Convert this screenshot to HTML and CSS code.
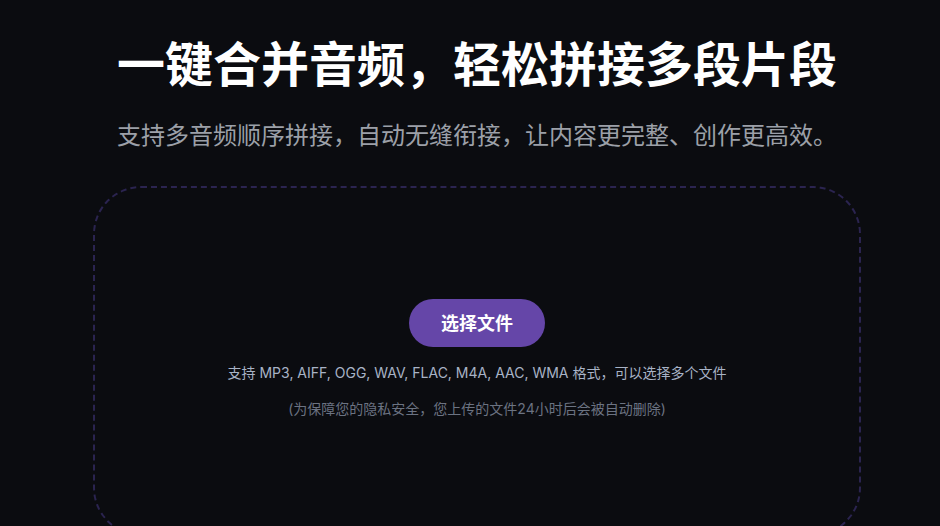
FILE: index.html
```html
<!DOCTYPE html>
<html lang="zh-CN">
<head>
    <meta charset="UTF-8">
    <meta name="viewport" content="width=device-width, initial-scale=1.0">
    <title>音频合并</title>
    <link rel="stylesheet" href="styles.css">
</head>
<body>
    <div class="page">
        <h1 class="title">一键合并音频，轻松拼接多段片段</h1>
        <p class="subtitle">支持多音频顺序拼接，自动无缝衔接，让内容更完整、创作更高效。</p>

        <div class="dropzone">
            <button class="pick-btn">选择文件</button>
            <p class="formats">支持 MP3, AIFF, OGG, WAV, FLAC, M4A, AAC, WMA 格式，可以选择多个文件</p>
            <p class="privacy">(为保障您的隐私安全，您上传的文件24小时后会被自动删除)</p>
        </div>
    </div>
</body>
</html>
```

FILE: styles.css
```css
body {
    margin: 0;
    background-color: #0b0c10;
    font-family: 'Inter', 'Noto Sans CJK SC', sans-serif;
    overflow: hidden;
}
.page {
    padding: 36px 0 0 14px;
    display: flex;
    flex-direction: column;
    align-items: center;
}
.title {
    margin: 0;
    font-size: 48px;
    line-height: 58px;
    font-weight: 700;
    color: #ffffff;
}
.subtitle {
    margin: 26px 0 0;
    font-size: 24px;
    line-height: 32px;
    color: #9ca0a8;
}
.dropzone {
    margin-top: 34px;
    width: 768px;
    height: 350px;
    box-sizing: border-box;
    border: 2px dashed #2b2450;
    border-radius: 48px;
    display: flex;
    flex-direction: column;
    align-items: center;
    padding-top: 111px;
}
.pick-btn {
    width: 136px;
    height: 48px;
    padding: 0 0 3px;
    border: none;
    border-radius: 24px;
    background-color: #6546a8;
    color: #ffffff;
    font-family: inherit;
    font-size: 18px;
    font-weight: 700;
    cursor: pointer;
}
.formats {
    margin: 16px 0 0;
    font-size: 14px;
    line-height: 20px;
    color: #a8b3c6;
}
.privacy {
    margin: 16px 0 0;
    font-size: 14px;
    line-height: 20px;
    color: #6b7382;
}
```
